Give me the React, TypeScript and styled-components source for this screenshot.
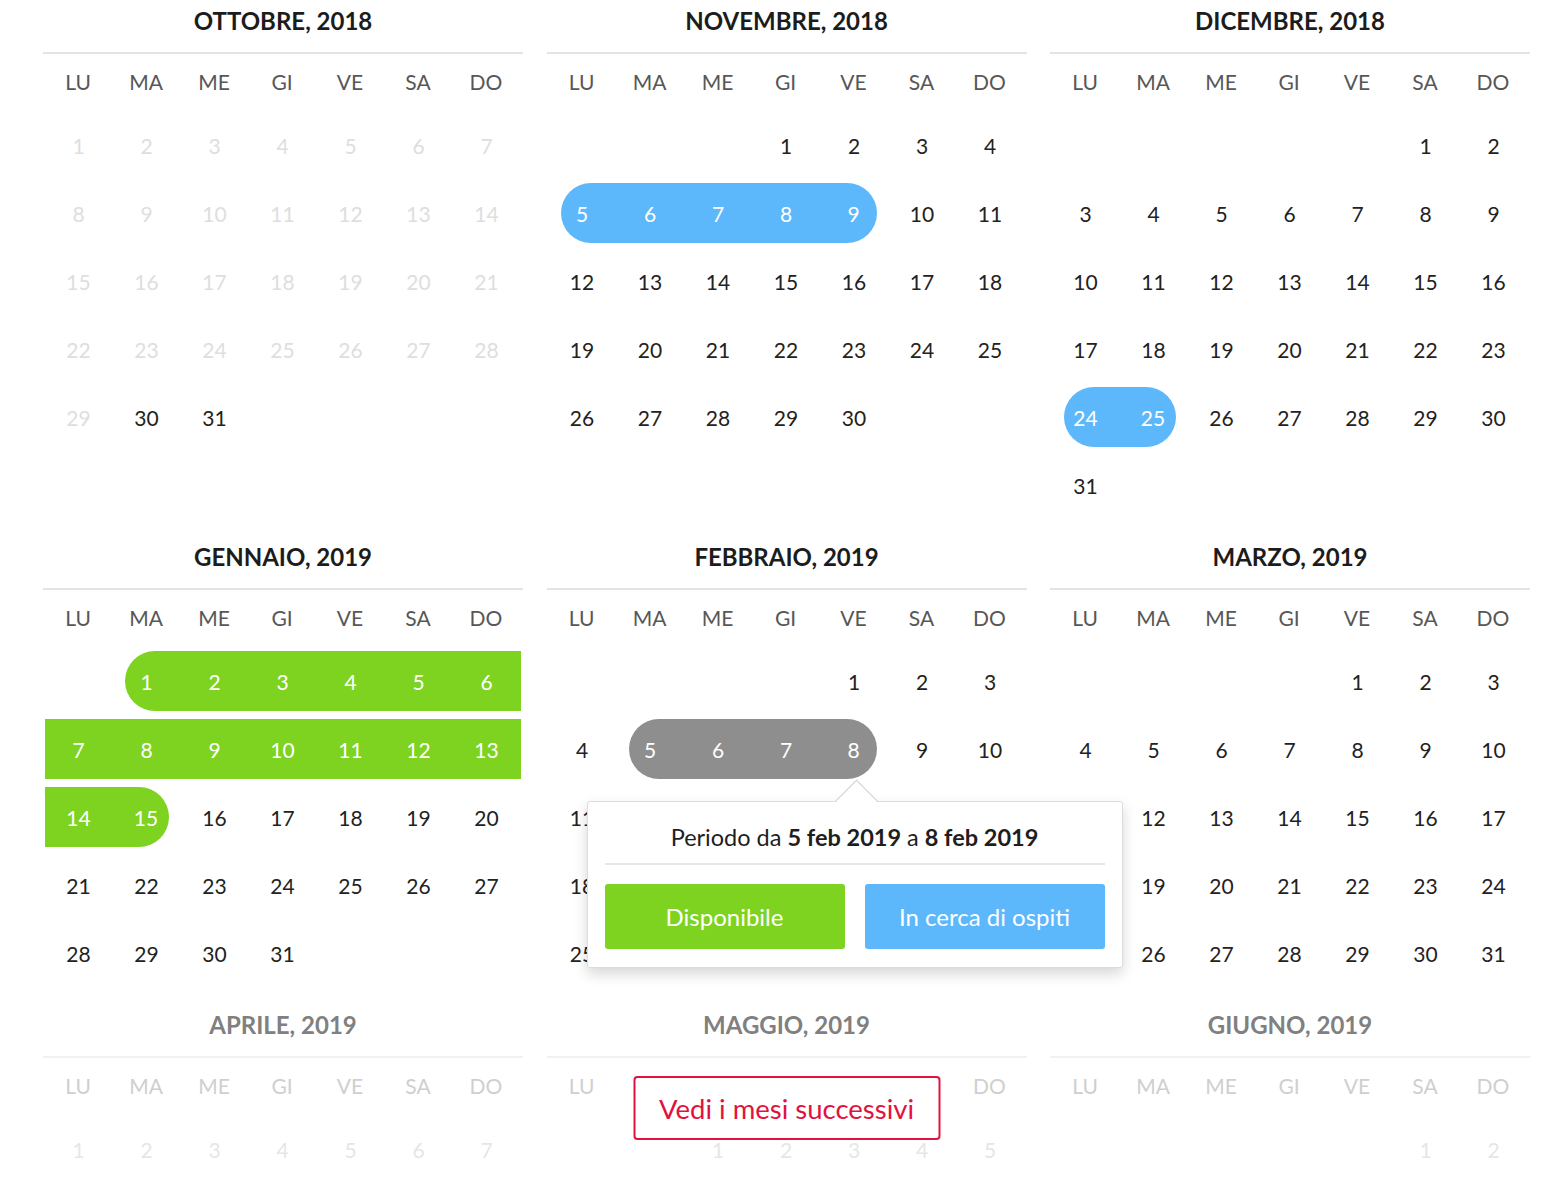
import React from "react";
import styled, { createGlobalStyle, css } from "styled-components";

const GlobalStyle = createGlobalStyle`
  html, body {
    margin: 0;
    padding: 0;
    background: #ffffff;
    font-family: Lato, "Open Sans", "Liberation Sans", sans-serif;
    overflow: hidden;
  }
  * { box-sizing: border-box; }
`;

type Kind = "blue" | "green" | "gray";
type Range = { kind: Kind; from: number; to: number };

type MonthDef = {
  name: string;
  year: number;
  month: number; // 0-based
  pastUntil?: number;
  ranges?: Range[];
  faded?: boolean;
};

const COLORS: Record<Kind, string> = {
  blue: "#5cb8fb",
  green: "#7ed321",
  gray: "#8e8e8e",
};

const WEEKDAYS = ["LU", "MA", "ME", "GI", "VE", "SA", "DO"];

const Page = styled.div`
  padding: 0 0 0 43px;
  width: 1562px;
  height: 1196px;
  overflow: hidden;
`;

const MonthsGrid = styled.div`
  display: grid;
  grid-template-columns: repeat(3, 480px);
  column-gap: 23.5px;
  row-gap: 17px;
  align-items: start;
`;

const MonthBlock = styled.section`
  position: relative;
  width: 480px;
`;

const MonthTitle = styled.h2<{ $faded?: boolean }>`
  margin: 0;
  height: 42px;
  line-height: 42px;
  text-align: center;
  font-size: 24px;
  font-weight: 700;
  color: ${(p) => (p.$faded ? "#808080" : "#1c1c1c")};
`;

const Rule = styled.div<{ $faded?: boolean }>`
  margin-top: 10px;
  height: 2px;
  background: ${(p) => (p.$faded ? "#f1f1f1" : "#e4e4e4")};
`;

const WeekRow = styled.div`
  display: grid;
  grid-template-columns: repeat(7, 68px);
  padding: 0 3px 0 1px;
  height: 56px;
`;

const WeekDay = styled.div<{ $faded?: boolean }>`
  line-height: 56px;
  text-align: center;
  font-size: 21px;
  color: ${(p) => (p.$faded ? "#cfcfcf" : "#575757")};
`;

const DaysGrid = styled.div`
  display: grid;
  grid-template-columns: repeat(7, 68px);
  grid-auto-rows: 68px;
  padding: 0 2px;
  margin-top: 1px;
`;

const DayCell = styled.div`
  display: flex;
  align-items: center;
  height: 68px;
`;

const DayFill = styled.div<{
  $kind?: Kind;
  $start?: boolean;
  $end?: boolean;
  $tone: "normal" | "past" | "faded";
}>`
  flex: 1;
  height: 60px;
  display: flex;
  align-items: center;
  justify-content: center;
  padding-right: 1px;
  font-size: 21px;
  color: ${(p) =>
    p.$tone === "past" ? "#dedede" : p.$tone === "faded" ? "#e6e6e6" : "#222222"};
  ${(p) =>
    p.$kind &&
    css`
      background: ${COLORS[p.$kind]};
      color: #ffffff;
    `}
  ${(p) =>
    p.$start &&
    css`
      margin-left: 12px;
      padding-right: 13px;
      border-top-left-radius: 30px;
      border-bottom-left-radius: 30px;
    `}
  ${(p) =>
    p.$end &&
    css`
      margin-right: 12px;
      padding-left: 11px;
      border-top-right-radius: 30px;
      border-bottom-right-radius: 30px;
    `}
  ${(p) =>
    p.$start &&
    p.$end &&
    css`
      padding: 0 1px 0 0;
    `}
`;

const Popover = styled.div`
  position: absolute;
  top: 265px;
  left: 40px;
  width: 536px;
  z-index: 5;
  background: #ffffff;
  border: 1px solid #dcdcdc;
  border-radius: 3px;
  box-shadow: 0 6px 14px rgba(0, 0, 0, 0.16);
  padding: 17px 17px 18px;

  &::before {
    content: "";
    position: absolute;
    top: -16px;
    left: 253px;
    width: 30px;
    height: 30px;
    background: #ffffff;
    border-top: 1px solid #cfcfcf;
    border-left: 1px solid #cfcfcf;
    transform: rotate(45deg);
  }
`;

const PopoverText = styled.p`
  position: relative;
  margin: 0;
  line-height: 36px;
  font-size: 23.5px;
  text-align: center;
  color: #1e1e1e;

  strong {
    font-weight: 700;
  }
`;

const PopoverRule = styled.div`
  margin: 8px 0 19px;
  height: 2px;
  background: #e6e6e6;
`;

const ActionRow = styled.div`
  display: grid;
  grid-template-columns: 1fr 1fr;
  column-gap: 20px;
`;

const ActionButton = styled.button<{ $kind: Kind }>`
  height: 65px;
  border: none;
  border-radius: 3px;
  background: ${(p) => COLORS[p.$kind]};
  color: #ffffff;
  font-family: Lato, "Open Sans", "Liberation Sans", sans-serif;
  font-size: 24px;
  cursor: pointer;
`;

const MoreButton = styled.button`
  position: absolute;
  top: 72px;
  left: 50%;
  transform: translateX(-50%);
  width: 307px;
  height: 64px;
  z-index: 4;
  background: #ffffff;
  border: 2px solid #e2123f;
  border-radius: 4px;
  color: #e2123f;
  font-family: Lato, "Open Sans", "Liberation Sans", sans-serif;
  font-size: 27.5px;
  cursor: pointer;
`;

const MONTHS: MonthDef[] = [
  { name: "OTTOBRE", year: 2018, month: 9, pastUntil: 29 },
  { name: "NOVEMBRE", year: 2018, month: 10, ranges: [{ kind: "blue", from: 5, to: 9 }] },
  { name: "DICEMBRE", year: 2018, month: 11, ranges: [{ kind: "blue", from: 24, to: 25 }] },
  { name: "GENNAIO", year: 2019, month: 0, ranges: [{ kind: "green", from: 1, to: 15 }] },
  { name: "FEBBRAIO", year: 2019, month: 1, ranges: [{ kind: "gray", from: 5, to: 8 }] },
  { name: "MARZO", year: 2019, month: 2 },
  { name: "APRILE", year: 2019, month: 3, faded: true },
  { name: "MAGGIO", year: 2019, month: 4, faded: true },
  { name: "GIUGNO", year: 2019, month: 5, faded: true },
];

function Month({ def, children }: { def: MonthDef; children?: React.ReactNode }) {
  const first = new Date(def.year, def.month, 1).getDay();
  const lead = (first + 6) % 7;
  const count = new Date(def.year, def.month + 1, 0).getDate();
  const cells: React.ReactNode[] = [];
  for (let i = 0; i < lead; i++) cells.push(<DayCell key={`b${i}`} />);
  for (let d = 1; d <= count; d++) {
    const range = def.ranges?.find((r) => d >= r.from && d <= r.to);
    const start = !!range && d === range.from;
    const end = !!range && d === range.to;
    const tone = def.faded ? "faded" : def.pastUntil && d <= def.pastUntil ? "past" : "normal";
    cells.push(
      <DayCell key={d}>
        <DayFill $kind={range?.kind} $start={start} $end={end} $tone={tone}>
          {d}
        </DayFill>
      </DayCell>
    );
  }
  return (
    <MonthBlock>
      <MonthTitle $faded={def.faded}>
        {def.name}, {def.year}
      </MonthTitle>
      <Rule $faded={def.faded} />
      <WeekRow>
        {WEEKDAYS.map((w) => (
          <WeekDay key={w} $faded={def.faded}>
            {w}
          </WeekDay>
        ))}
      </WeekRow>
      <DaysGrid>{cells}</DaysGrid>
      {children}
    </MonthBlock>
  );
}

export default function App() {
  return (
    <>
      <GlobalStyle />
      <Page>
        <MonthsGrid>
          {MONTHS.map((m) => {
            if (m.name === "FEBBRAIO") {
              return (
                <Month key={m.name} def={m}>
                  <Popover>
                    <PopoverText>
                      Periodo da <strong>5 feb 2019</strong> a <strong>8 feb 2019</strong>
                    </PopoverText>
                    <PopoverRule />
                    <ActionRow>
                      <ActionButton $kind="green">Disponibile</ActionButton>
                      <ActionButton $kind="blue">In cerca di ospiti</ActionButton>
                    </ActionRow>
                  </Popover>
                </Month>
              );
            }
            if (m.name === "MAGGIO") {
              return (
                <Month key={m.name} def={m}>
                  <MoreButton>Vedi i mesi successivi</MoreButton>
                </Month>
              );
            }
            return <Month key={m.name} def={m} />;
          })}
        </MonthsGrid>
      </Page>
    </>
  );
}
